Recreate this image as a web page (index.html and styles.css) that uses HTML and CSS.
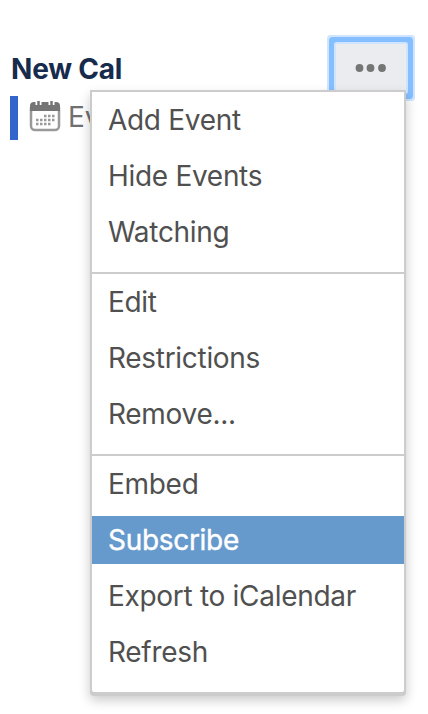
FILE: index.html
```html
<!DOCTYPE html>
<html lang="en">
  <head>
    <meta charset="utf-8">
    <title>Calendars</title>
    <link rel="stylesheet" href="styles.css">
  </head>
  <body>
    <div class="calendar">
      <div class="header">
        <h1>New Cal</h1>
        <button class="more">
          <svg width="32" height="10" viewBox="0 0 32 10" fill="#757575">
            <circle cx="4.500" cy="5" r="3.900"/>
            <circle cx="15.500" cy="5" r="3.900"/>
            <circle cx="27" cy="5" r="3.900"/>
          </svg>
        </button>
      </div>
      <div class="events">
        <svg class="icon" width="32" height="32" viewBox="0 0 32 32">
          <rect x="2" y="4" width="28" height="26" rx="4" fill="#fff" stroke="#999" stroke-width="2.500"/>
          <path d="M1 11V6q0-4 4-4h22q4 0 4 4v5z" fill="#757575"/>
          <path d="M9.500 0v5M22.500 0v5" stroke="#fff" stroke-width="6"/>
          <path d="M9.500 1v5M22.500 1v5" stroke="#757575" stroke-width="2.500"/>
          <path d="M15 16h11M7 20h19M7 24h15" stroke="#999" stroke-width="2.500" stroke-dasharray="2.500 1.500"/>
        </svg>
        <span class="name">Events</span>
      </div>

      <div class="menu">
        <ul>
          <li>Add Event</li>
          <li>Hide Events</li>
          <li>Watching</li>
        </ul>
        <ul>
          <li>Edit</li>
          <li>Restrictions</li>
          <li>Remove...</li>
        </ul>
        <ul>
          <li>Embed</li>
          <li class="active">Subscribe</li>
          <li>Export to iCalendar</li>
          <li>Refresh</li>
        </ul>
      </div>
    </div>
  </body>
</html>
```
FILE: styles.css
```css
body {
  margin: 0;
  background-color: white;
  font-family: Inter, sans-serif;
  font-size: 28px;
}

.calendar {
  position: relative;
  box-sizing: border-box;
  min-height: 714px;
  padding: 44px 22px 0 10px;
}

.header {
  display: flex;
  justify-content: space-between;
  height: 52px;
}

h1 {
  margin: 4px 0 0 1px;
  font-size: 28px;
  line-height: 42px;
  letter-spacing: -0.2px;
  color: #172b4d;
}

.more {
  display: flex;
  align-items: center;
  justify-content: center;
  width: 70px;
  height: 48px;
  padding: 0;
  border: 0;
  border-radius: 1px;
  background-color: #ebecf0;
  box-shadow: 0 0 0 2px #cfe5ff, 0 0 0 7px #85bfff, 0 0 0 9px #cfe5ff;
}

.events {
  display: flex;
  align-items: center;
  box-sizing: border-box;
  height: 44px;
  padding-left: 11px;
  border-left: 8px solid #36c;
  color: #707070;
}

.icon {
  flex: none;
  margin-bottom: 5px;
}

.name {
  margin: 0 0 3px 7px;
}

.menu {
  position: absolute;
  top: 90px;
  left: 90px;
  width: 312px;
  border: 2px solid #ccc;
  border-radius: 0 0 4px 4px;
  background-color: white;
  box-shadow: 0 2px 0 #ccc, 0 6px 12px rgba(0, 0, 0, 0.22);
}

ul {
  margin: 0;
  padding: 4px 0 8px;
  list-style: none;
}

ul + ul {
  border-top: 2px solid #ccc;
}

li {
  height: 48px;
  margin-bottom: 8px;
  padding-left: 16px;
  line-height: 49px;
  letter-spacing: -0.3px;
  color: #505050;
}

.active {
  background-color: #6699cc;
  color: white;
  -webkit-text-stroke: 0.4px white;
}
```
